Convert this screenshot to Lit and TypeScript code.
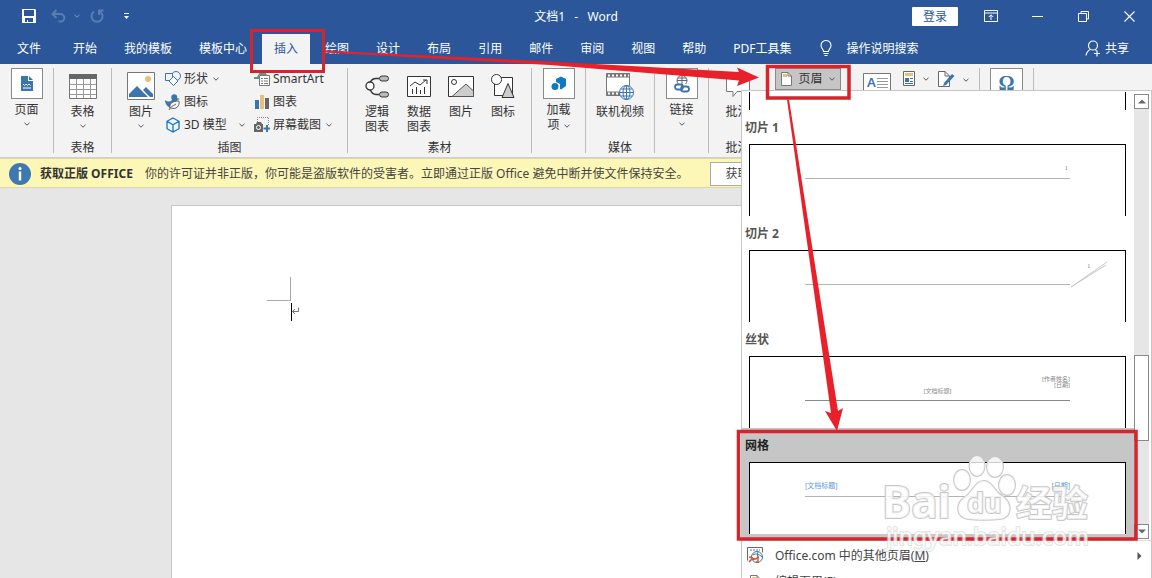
import { LitElement, html, css, svg, nothing, type TemplateResult } from "lit";
import { customElement, property } from "lit/decorators.js";
import { classMap } from "lit/directives/class-map.js";

const icon = (w: number, h: number, body: unknown) =>
  html`<svg width=${w} height=${h} viewBox="0 0 ${w} ${h}" fill="none" aria-hidden="true">${body}</svg>`;

const chevron = () => icon(6, 4, svg`<path d="M.5 .8 3 3.2 5.5 .8" stroke="#555"/>`);

const icons = {
  save: icon(15, 15, svg`<path fill-rule="evenodd" fill="#fff" d="M0 0h13l1 1v13H0zM2 1v6h10V1zM3 9v4h2v-2h1v2h5V9z"/>`),
  undo: icon(15, 14, svg`<path d="M5.500 1 1.500 5l4 4M2 5h7.500a3.800 3.800 0 0 1 0 7.600H7.500" stroke="#5a7db3" stroke-width="2"/>`),
  redo: icon(14, 14, svg`<path d="M4 2.600a5.500 5.500 0 1 0 6 0M9 6V1.600h4.500" stroke="#5a7db3" stroke-width="2"/>`),
  more: icon(7, 7, svg`<path d="M1 .5h5" stroke="#fff"/><path d="M1 3h5l-2.500 3z" fill="#fff"/>`),
  display: icon(14, 12, svg`<path d="M.5 .5h13v11H.5zM.5 3h13M7 10V5M4.800 7 7 4.800 9.200 7" stroke="#fff"/>`),
  min: icon(11, 11, svg`<path d="M0 5.500h11" stroke="#fff"/>`),
  restore: icon(11, 11, svg`<path d="M.5 2.500h8v8h-8zM3 2.500V.5h7.500V8H8.500" stroke="#fff"/>`),
  close: icon(11, 11, svg`<path d="m.5.5 10 10m0-10-10 10" stroke="#fff" stroke-width="1.100"/>`),
  bulb: icon(12, 17, svg`<path d="M3.500 11.500C3.500 9 1 8.500 1 5.500a5 5 0 0 1 10 0c0 3-2.500 3.500-2.500 6zM3.500 13.500h5M4.500 15.500h3" stroke="#fff" stroke-width="1.100"/>`),
  share: icon(16, 17, svg`<circle cx="8" cy="5.500" r="4.500" stroke="#fff" stroke-width="1.200"/><path d="M1 15.500c.5-3 2-5 4.500-6M10 9.500l1.500 1M12 10.500v6M9 13.500h6" stroke="#fff" stroke-width="1.200"/>`),
  pageBlue: icon(12, 15, svg`<path d="M0 0h7v5h5v10H0z" fill="#3a75ad"/><path d="M8 0v4h4z" fill="#3a75ad"/><path d="m2 8 1.500 1.500L5 8l1.500 1.500L8 8l1.500 1.500M2 12h8" stroke="#fff"/>`),
  table: icon(28, 25, svg`<path d="M.5 .5h27v24H.5z" fill="#fff" stroke="#777"/><path d="M0 0h28v5H0z" fill="#666"/><path d="M1 10.500h26M1 15.500h26M1 20.500h26M7.500 5v19M14.500 5v19M21.500 5v19" stroke="#999"/>`),
  picture: icon(28, 28, svg`<path d="M.5 .5h27v27H.5z" fill="#fff" stroke="#777"/><circle cx="21" cy="7" r="3" fill="#e8bf79"/><path d="M2 25v-3l8-8 11 11zM16 18l3-3 7 7v3h-3z" fill="#3a75ad"/>`),
  shapes: icon(16, 15, svg`<circle cx="11" cy="5" r="4.500" stroke="#3a75ad"/><path d="M.5 2.500h7v7h-7z" fill="#f3f3f3" stroke="#3a75ad"/><path d="m8.500 5.500 4.500 4.500-4.500 4.500L4 10z" fill="#fff" stroke="#3a75ad"/>`),
  duck: icon(16, 16, svg`<path d="M7 1c3-2 6 0 5 3l3 1-3 1c2 4 0 8-5 8C3 14 0 10 0 6c3 2 5 2 7 0-1-2-1-4 0-5z" fill="#3a75ad"/><path d="M5 14c-1-5 3-7 9-7 1 5-3 9-8 7zm-1 2c1-3 4-4 7-6" fill="#f3f3f3" stroke="#666"/>`),
  cube: icon(14, 16, svg`<path d="M7 1 13 4.300v7.400L7 15 1 11.700V4.300zM1 4.300l6 3.500 6-3.500M7 7.800V15" stroke="#0f7ac2" stroke-width="1.300"/>`),
  smart: icon(16, 14, svg`<path d="M0 5h3l3-5h5l2 3H5v4H0z" fill="#5c9a80"/><path d="M5.500 3.500h10v10h-10z" fill="#fff" stroke="#777"/><path d="M7 6.500h2m1 0h4M7 9h2m1 0h4m-7 2.500h2m1 0h4" stroke="#777"/>`),
  chart: icon(14, 14, svg`<path d="M0 5h4v9H0z" fill="#3a75ad"/><path d="M5 0h4v14H5z" fill="#e8bf79"/><path d="M10 3h4v11h-4z" fill="#666"/>`),
  shot: icon(16, 15, svg`<path d="M3.500 5V.5h11V8" stroke="#888" stroke-dasharray="1 1"/><path d="M0 7h2l1-2h4l1 2h1v8H0z" fill="#666"/><circle cx="4.500" cy="10.500" r="2" stroke="#fff"/><path d="M13 8v7M9.500 11.500h7" stroke="#3a75ad" stroke-width="2"/>`),
  logic: icon(24, 23, svg`<path d="M14 3.500h-3c-3 0-5 2-6 4M5 14c1 3 3 5.500 6 5.500h3" stroke="#333" stroke-width="1.300"/><circle cx="5" cy="11" r="4" fill="#fff" stroke="#333" stroke-width="1.300"/><rect x="14.500" y="1" width="9" height="5" rx="2.500" fill="#bbb" stroke="#333"/><rect x="14.500" y="17" width="9" height="5" rx="2.500" fill="#bbb" stroke="#333"/>`),
  data: icon(24, 21, svg`<path d="M.5 .5h23v20H.5z" fill="#fff" stroke="#333"/><path d="m3 10 5-4 5 3 6-5m-3 0h4v4M5.500 18v-5m4 5v-7m4 7v-4m4 4v-7" stroke="#333"/>`),
  photo: icon(26, 21, svg`<path d="M.5 .5h25v20H.5z" fill="#fff" stroke="#333"/><circle cx="6" cy="6" r="2.500" stroke="#333"/><path d="M4 20.500 18 8l7.500 7v5.500z" fill="#ccc" stroke="#555"/>`),
  figure: icon(24, 24, svg`<path d="M3.500 3.500h18v18h-18z" fill="#fff" stroke="#333"/><circle cx="5.500" cy="5.500" r="5" fill="#fff" stroke="#333"/><path d="m17 9.500 6 14H11z" fill="#ccc" stroke="#333"/>`),
  addin: icon(16, 16, svg`<path d="m5 3 5-2.500L15 3v7l-5 3.500-1-.5V8L5 6z" fill="#0f7ac2"/><circle cx="4" cy="10.500" r="3.500" fill="#0f7ac2"/>`),
  video: icon(28, 28, svg`<path d="M.5 1.500h23v22H.5z" fill="#fff" stroke="#777"/><path d="M0 3.500h24M0 21.500h14" stroke="#777" stroke-width="4"/><path d="M2 3.500h21M2 21.500h12" stroke="#fff" stroke-width="2" stroke-dasharray="2 2"/><circle cx="20.500" cy="20.500" r="7" fill="#fff" stroke="#3a75ad"/><path d="M13.500 20.500h14M20.500 13.500v14M15 17h11M15 24h11" stroke="#3a75ad"/><ellipse cx="20.500" cy="20.500" rx="3.500" ry="7" stroke="#3a75ad"/>`),
  link: icon(16, 18, svg`<circle cx="8" cy="5.500" r="5" stroke="#666"/><path d="M3 5.500h10M8 1v9M4 3h8" stroke="#666"/><path d="M0 9h16v9H0z" fill="#fff"/><rect x="1" y="9.500" width="8" height="5" rx="2.500" stroke="#3a75ad" stroke-width="1.800"/><rect x="7" y="11.500" width="8" height="5" rx="2.500" stroke="#3a75ad" stroke-width="1.800"/>`),
  comment: icon(26, 26, svg`<path d="M1.500 3.500h23v15H12l-4 5v-5H1.500z" fill="#fff" stroke="#777"/><path d="M2 0v6M0 2h6" stroke="#777"/>`),
  header: icon(11, 14, svg`<path d="M.5 .5H7l3.500 3.500v9.500H.5z" fill="#fff" stroke="#777"/><path d="M2 2h4v3H2z" fill="#e8bf79"/><path d="M7 .5V4h3.500" stroke="#777"/>`),
  textBox: icon(28, 22, svg`<path d="M.5 .5h27v21H.5z" fill="#fff" stroke="#777"/><path d="M14 5.500h11M14 8.500h11M14 11.500h11M14 14.500h11" stroke="#999"/>`),
  parts: icon(12, 15, svg`<path d="M.5 .5h11v14H.5z" fill="#fff" stroke="#666"/><path d="M2 2h8v3H2z" fill="#e8bf79"/><path d="M2 7h4v4H2z" fill="#3a75ad"/><path d="M7 7.500h3M7 10.500h3M2 12.500h8" stroke="#3a75ad"/>`),
  sign: icon(17, 17, svg`<path d="M.5 .5H7L11.500 5v10.500H.5z" fill="#fff" stroke="#666"/><path d="M7 .5V5h4.500" stroke="#666"/><path d="m6 12 8-9 2.500 2L8 14l-3 1z" fill="#3a75ad"/>`),
  info: icon(22, 22, svg`<circle cx="11" cy="11" r="11" fill="#3f78ae"/><circle cx="11" cy="5.500" r="1.500" fill="#fff"/><path d="M11 8.500v9" stroke="#fff" stroke-width="2.400"/>`),
  office: icon(17, 17, svg`<path d="M.5 13.500V.5h15v5" stroke="#666"/><path d="M3 3h10" stroke="#777" stroke-dasharray="2 1"/><circle cx="10" cy="10" r="5.500" fill="#fff" stroke="#3a75ad"/><path d="M6 8c3-2 6-1 9 2M11 5c-1 2-1 4 1 6" stroke="#3a75ad"/><path d="M2 15c2-3 4-4 7-3l2-2v5H9M2 10c2 0 4 1 5 3" stroke="#d8572a" stroke-width="1.400"/>`),
  up: icon(8, 5, svg`<path d="M0 4.500 4 .5l4 4z" fill="#666"/>`),
  down: icon(8, 5, svg`<path d="M0 .5 4 4.500l4-4z" fill="#666"/>`),
  right: icon(5, 8, svg`<path d="M.5 0 4.500 4l-4 4z" fill="#555"/>`),
};

@customElement("big-button")
class BigButton extends LitElement {
  @property({ attribute: false }) icon: unknown = nothing;
  @property({ type: Boolean }) boxed = false;
  @property({ type: Boolean }) menu = false;
  @property({ type: Boolean }) inlineMenu = false;
  @property() label = "";

  static styles = css`
    :host { display: block; }
    button { display: flex; flex-direction: column; align-items: center; width: 100%; margin: 0; padding: 0; border: 0; background: none; color: #333; font: inherit; line-height: 15px; white-space: pre-line; }
    .art { display: flex; align-items: center; justify-content: center; height: 28px; margin: 4px 0; }
    .art.boxed { box-sizing: border-box; width: 32px; height: 31px; margin: 0 0 3px; background: #fff; border: 1px solid #8a8a8a; }
    .arrow { display: flex; margin-top: 5px; }
    .side { margin-left: 4px; vertical-align: middle; }
    .side svg { vertical-align: 2px; }
    svg { flex: none; }
  `;

  render() {
    return html`<button type="button">
      <span class=${classMap({ art: true, boxed: this.boxed })}>${this.icon}</span>
      <span>${this.label}${this.inlineMenu ? html`<span class="side">${chevron()}</span>` : nothing}</span>
      ${this.menu ? html`<span class="arrow">${chevron()}</span>` : nothing}
    </button>`;
  }
}

@customElement("header-gallery")
class HeaderGallery extends LitElement {
  static styles = css`
    :host { display: flex; flex-direction: column; box-sizing: border-box; background: #fff; border: 1px solid #c6c6c6; border-bottom: 0; overflow: hidden; color: #555; }
    .top { display: flex; border-bottom: 1px solid #dcdcdc; padding-top: 1px; flex: none; }
    .list { flex: 1; min-width: 0; }
    button { font: inherit; color: inherit; margin: 0; border: 0; padding: 0; background: none; text-align: left; }
    .item { display: block; width: 100%; padding: 0 8px 0 7px; }
    .item.current { background: #c6c6c6; padding-bottom: 6px; color: #222; }
    .name { display: block; box-sizing: border-box; height: 34px; padding-top: 2px; line-height: 32px; margin-left: -4px; font-weight: 700; }
    .preview { display: block; position: relative; box-sizing: border-box; height: 72px; padding: 0 55px; background: #fff; border: 1px solid #000; border-bottom: 0; }
    .tail { height: 18px; margin: 0 8px 0 7px; border: solid #000; border-width: 0 1px; }
    .head { display: flex; flex-direction: column; justify-content: flex-end; box-sizing: border-box; height: 34px; border-bottom: 1px solid #b4b4b4; font-size: 6px; line-height: 6px; color: #888; }
    .head.silk { height: 44px; border-color: #888; padding-bottom: 6px; }
    .head.grid { flex-direction: row; justify-content: space-between; align-items: flex-end; padding-bottom: 6px; font-size: 7px; line-height: 8px; color: #5b9bd5; }
    .end { text-align: right; }
    .mid { text-align: center; }
    .num { text-align: right; padding: 0 2px 6px; font-size: 7px; line-height: 8px; font-family: "Liberation Serif", serif; }
    .slash { position: absolute; right: 17px; top: 8px; }
    .scroll { display: flex; flex-direction: column; width: 15px; margin: 2px 2px 1px 0; background: #e6e6e6; }
    .scroll button, .thumb { box-sizing: border-box; background: #fff; border: 1px solid #8a8a8a; }
    .scroll button { display: flex; align-items: center; justify-content: center; height: 15px; flex: none; }
    .before { flex: 247; }
    .thumb { flex: 85; }
    .after { flex: 83; }
    .menu { display: flex; align-items: center; gap: 11px; height: 26px; padding: 3px 9px 0 5px; flex: none; width: 100%; color: #444; }
    .menu span { flex: 1; }
    .menu svg { flex: none; }
    .menu .glyph { width: 17px; display: flex; justify-content: center; flex: none; }
  `;

  private item(name: string, body: TemplateResult, current = false) {
    return html`<button type="button" class=${classMap({ item: true, current })}>
      <span class="name">${name}</span><span class="preview">${body}</span>
    </button>`;
  }

  render() {
    return html`
      <div class="top">
        <div class="list">
          <div class="tail"></div>
          ${this.item("切片 1", html`<span class="head"><span class="num">1</span></span>`)}
          ${this.item("切片 2", html`<span class="head"></span>
            <span class="slash">${icon(38, 30, svg`<path d="M1 28 37 3M1 28 36 6" stroke="#c8c8c8"/><text x="17" y="9" font-size="7" font-family="Liberation Serif" fill="#888">1</text>`)}</span>`)}
          ${this.item("丝状", html`<span class="head silk"><span class="end">[作者姓名]</span><span class="end">[日期]</span><span class="mid">[文档标题]</span></span>`)}
          ${this.item("网格", html`<span class="head grid"><span>[文档标题]</span><span>[日期]</span></span>`, true)}
        </div>
        <div class="scroll">
          <button type="button" aria-label="向上">${icons.up}</button>
          <div class="before"></div><div class="thumb"></div><div class="after"></div>
          <button type="button" aria-label="向下">${icons.down}</button>
        </div>
      </div>
      <button type="button" class="menu"><span class="glyph">${icons.office}</span><span>Office.com 中的其他页眉(<u>M</u>)</span>${icons.right}</button>
      <button type="button" class="menu"><span class="glyph">${icons.header}</span><span>编辑页眉(<u>E</u>)</span></button>
    `;
  }
}

@customElement("app-root")
class AppRoot extends LitElement {
  static styles = css`
    :host { display: flex; flex-direction: column; position: relative; height: 100vh; overflow: hidden; font: 12px/16px "Noto Sans", "Noto Sans CJK SC", sans-serif; color: #333; background: #e6e6e6; }
    button { font: inherit; color: inherit; margin: 0; border: 0; padding: 0; background: none; white-space: nowrap; }
    svg { flex: none; }
    .title { display: grid; grid-template-columns: 1fr auto 1fr; align-items: center; height: 32px; flex: none; background: #2b579a; color: #fff; }
    .quick { display: flex; align-items: center; padding-left: 22px; }
    .quick button { display: flex; }
    .quick .undo { margin: 0 8px 0 14px; }
    .drop { display: flex; margin-right: 10px; opacity: .4; }
    .quick .redo { margin-right: 19px; }
    .doc { white-space: pre; padding-top: 1px; }
    .window { display: flex; align-items: center; justify-content: flex-end; }
    .login { height: 19px; padding: 0 11px; margin-right: 10px; line-height: 19px; background: #fff; color: #2b579a; border-radius: 1px; }
    .win { display: flex; align-items: center; justify-content: center; width: 46px; height: 30px; }
    .tabs { display: flex; align-items: stretch; gap: 3px; height: 32px; flex: none; padding: 0 23px 0 5px; background: #2b579a; color: #fff; }
    .tab { padding: 0 12px; margin-top: 2px; height: 30px; }
    .tab.first { margin-right: 5px; }
    .tab.on { background: #f3f3f3; color: #2b579a; }
    .with { display: flex; align-items: center; padding-top: 1px; }
    .tell { gap: 14px; margin-left: 14px; }
    .share { gap: 4px; margin-left: auto; }
    .ribbon { display: flex; flex: none; height: 94px; box-sizing: border-box; padding: 4px 0; background: #f3f3f3; border-bottom: 1px solid #d2d0ce; }
    .group { display: flex; flex-direction: column; flex: none; box-sizing: border-box; border-right: 1px solid #bdbdbd; }
    .group.open { border-right: 0; }
    .row { display: flex; flex: 1; min-height: 0; }
    .caption { text-align: center; line-height: 11px; }
    .w54 { width: 54px; } .w58 { width: 58px; } .w69 { width: 69px; } .w184 { width: 184px; } .w236 { width: 236px; } .w214 { width: 214px; } .w57 { width: 57px; }
    .fill { flex: 1; }
    .four { padding: 0 7px 0 8px; }
    .four > * { flex: 1; }
    .art { padding-left: 8px; }
    .art > big-button { width: 42px; }
    .small { display: grid; grid-template-columns: 89px auto; grid-auto-rows: 23px; align-content: start; margin-left: 3px; }
    .small button { display: flex; align-items: center; gap: 3px; height: 21px; }
    .small span { display: flex; }
    .small .pic { justify-content: center; width: 16px; }
    .small .pad { margin-left: 2px; }
    .small .far { margin-left: 9px; }
    .text { align-items: flex-start; padding-left: 9px; }
    .text button { display: flex; align-items: center; gap: 8px; }
    .head { box-sizing: border-box; width: 66px; height: 22px; justify-content: center; background: #c5c5c5; border: 1px solid #8a8a8a; }
    .text .head { gap: 6px; }
    .text .box { position: relative; margin: 5px 12px 0 22px; }
    .letter { position: absolute; left: 4px; top: 1px; font-size: 13px; font-weight: 600; color: #3a75ad; }
    .text .icon { margin: 3px 9px 0 0; }
    .omega { display: flex; justify-content: center; box-sizing: border-box; width: 33px; height: 31px; margin: 0 auto; background: #fff; border: 1px solid #8a8a8a; }
    .omega span { font: 700 20px/28px "Liberation Serif", serif; color: #3a75ad; }
    .notice { display: flex; align-items: center; flex: none; box-sizing: border-box; height: 30px; padding: 1px 0 0 9px; background: #fcf7b6; border: solid #dcd8a4; border-width: 1px 0; color: #444; white-space: nowrap; }
    .notice strong { margin: 0 12px 0 9px; color: #333; }
    .notice button { height: 24px; margin-left: 22px; padding: 0 14px; background: #fff; border: 1px solid #ababab; }
    .desk { flex: 1; display: flex; padding: 17px 0 0 171px; }
    .paper { flex: 1; background: #fff; border: solid #c6c6c6; border-width: 1px 0 0 1px; padding: 71px 0 0 95px; }
    header-gallery { position: absolute; left: 741px; right: 0; top: 90px; bottom: 0; }
    .marks { position: absolute; left: 0; top: 0; pointer-events: none; }
    .brand { font-family: "Noto Sans", "Noto Sans CJK SC", sans-serif; font-weight: 700; }
  `;

  private tabs = ["文件", "开始", "我的模板", "模板中心", "插入", "绘图", "设计", "布局", "引用", "邮件", "审阅", "视图", "帮助", "PDF工具集"];

  private small(art: unknown, label: string, menu = "") {
    return html`<button type="button"><span class="pic">${art}</span>${label}${menu ? html`<span class=${menu}>${chevron()}</span>` : nothing}</button>`;
  }

  render() {
    return html`
      <header class="title">
        <div class="quick">
          <button type="button" aria-label="保存">${icons.save}</button>
          <button type="button" class="undo" aria-label="撤消">${icons.undo}</button>
          <span class="drop">${icon(6, 4, svg`<path d="M.5 .8 3 3.200 5.500 .8" stroke="#fff"/>`)}</span>
          <button type="button" class="redo" aria-label="重复">${icons.redo}</button>
          <button type="button" aria-label="自定义">${icons.more}</button>
        </div>
        <div class="doc">文档1   -   Word</div>
        <div class="window">
          <button type="button" class="login">登录</button>
          <button type="button" class="win" aria-label="功能区显示选项">${icons.display}</button>
          <button type="button" class="win" aria-label="最小化">${icons.min}</button>
          <button type="button" class="win" aria-label="还原">${icons.restore}</button>
          <button type="button" class="win" aria-label="关闭">${icons.close}</button>
        </div>
      </header>
      <nav class="tabs">
        ${this.tabs.map((t, i) => html`<button type="button" class=${classMap({ tab: true, first: i === 0, on: t === "插入" })}>${t}</button>`)}
        <button type="button" class="with tell">${icons.bulb}操作说明搜索</button>
        <button type="button" class="with share">${icons.share}共享</button>
      </nav>
      <section class="ribbon">
        <div class="group w54"><big-button boxed menu label="页面" .icon=${icons.pageBlue}></big-button></div>
        <div class="group w58"><div class="row"><big-button class="fill" menu label="表格" .icon=${icons.table}></big-button></div><div class="caption">表格</div></div>
        <div class="group w236">
          <div class="row art">
            <big-button menu label="图片" .icon=${icons.picture}></big-button>
            <div class="small">
              ${this.small(icons.shapes, "形状", "pad")}${this.small(icons.smart, "SmartArt")}
              ${this.small(icons.duck, "图标")}${this.small(icons.chart, "图表")}
              ${this.small(icons.cube, "3D 模型", "far")}${this.small(icons.shot, "屏幕截图", "pad")}
            </div>
          </div>
          <div class="caption">插图</div>
        </div>
        <div class="group w184">
          <div class="row four">
            <big-button label=${"逻辑\n图表"} .icon=${icons.logic}></big-button>
            <big-button label=${"数据\n图表"} .icon=${icons.data}></big-button>
            <big-button label="图片" .icon=${icons.photo}></big-button>
            <big-button label="图标" .icon=${icons.figure}></big-button>
          </div>
          <div class="caption">素材</div>
        </div>
        <div class="group w54"><big-button boxed inlineMenu label=${"加载\n项"} .icon=${icons.addin}></big-button></div>
        <div class="group w69"><div class="row"><big-button class="fill" label="联机视频" .icon=${icons.video}></big-button></div><div class="caption">媒体</div></div>
        <div class="group w54"><big-button boxed menu label="链接" .icon=${icons.link}></big-button></div>
        <div class="group open w57"><div class="row"><big-button class="fill" label="批注" .icon=${icons.comment}></big-button></div><div class="caption">批注</div></div>
        <div class="group w214">
          <div class="row text">
            <button type="button" class="head">${icons.header}页眉${chevron()}</button>
            <button type="button" class="box" aria-label="文本框">${icons.textBox}<span class="letter">A</span></button>
            <button type="button" class="icon" aria-label="文档部件">${icons.parts}${chevron()}</button>
            <button type="button" class="icon" aria-label="签名行">${icons.sign}${chevron()}</button>
          </div>
        </div>
        <div class="group w54"><button type="button" class="omega" aria-label="符号"><span>Ω</span></button></div>
      </section>
      <div class="notice">${icons.info}<strong>获取正版 OFFICE</strong><span>你的许可证并非正版，你可能是盗版软件的受害者。立即通过正版 Office 避免中断并使文件保持安全。</span><button type="button">获取正版 Office</button></div>
      <main class="desk"><div class="paper">${icon(36, 46, svg`<path d="M0 23.500h24M23.500 0v24" stroke="#aaa"/><path d="M24.500 26v18" stroke="#000"/><path d="M31.500 30.500v4h-6m2.500-2.500L25.500 34.500l2.500 2.500" stroke="#777"/>`)}</div></main>
      <header-gallery></header-gallery>
      <svg class="marks" width="1152" height="578" viewBox="0 0 1152 578" fill="none">
        <g stroke="#d8232c">
          <rect x="251.500" y="30.500" width="72" height="41" stroke-width="3"/>
          <rect x="767.500" y="66.500" width="81.500" height="31.500" stroke-width="3.500"/>
          <rect x="738.500" y="431.500" width="397.500" height="107.500" stroke-width="3.500"/>
        </g>
        <path d="M325 50.500 550 61.500 739 72 737 67.500 759 77.500 737 86 739 80.500 550 65 325 52.500z" fill="#e8202a"/>
        <path d="M787 99.500h2L838 411l5-3-6 23-12-20 6 2z" fill="#e8202a"/>
        <g class="brand" fill="#fff" fill-opacity=".8" stroke="#c8c8c8" stroke-width="2" stroke-linejoin="round" paint-order="stroke">
          <ellipse cx="962" cy="480" rx="8" ry="10"/><ellipse cx="977" cy="466" rx="7.500" ry="10"/><ellipse cx="995" cy="467" rx="8" ry="10"/><ellipse cx="1007" cy="485" rx="8" ry="10"/>
          <path d="M984 481c8 0 10 10 18 15 11 7 10 22-2 23-7 1-25 1-32 0-12-2-13-15-3-22 8-5 10-16 19-16z"/>
          <text x="882" y="518" font-size="44">Bai</text>
          <text x="967" y="513" font-size="27">du</text>
          <text x="1016" y="517" font-size="36">经验</text>
          <text x="886" y="545" font-size="23" font-weight="500" stroke-opacity=".5">jingyan.baidu.com</text>
        </g>
      </svg>
    `;
  }
}
